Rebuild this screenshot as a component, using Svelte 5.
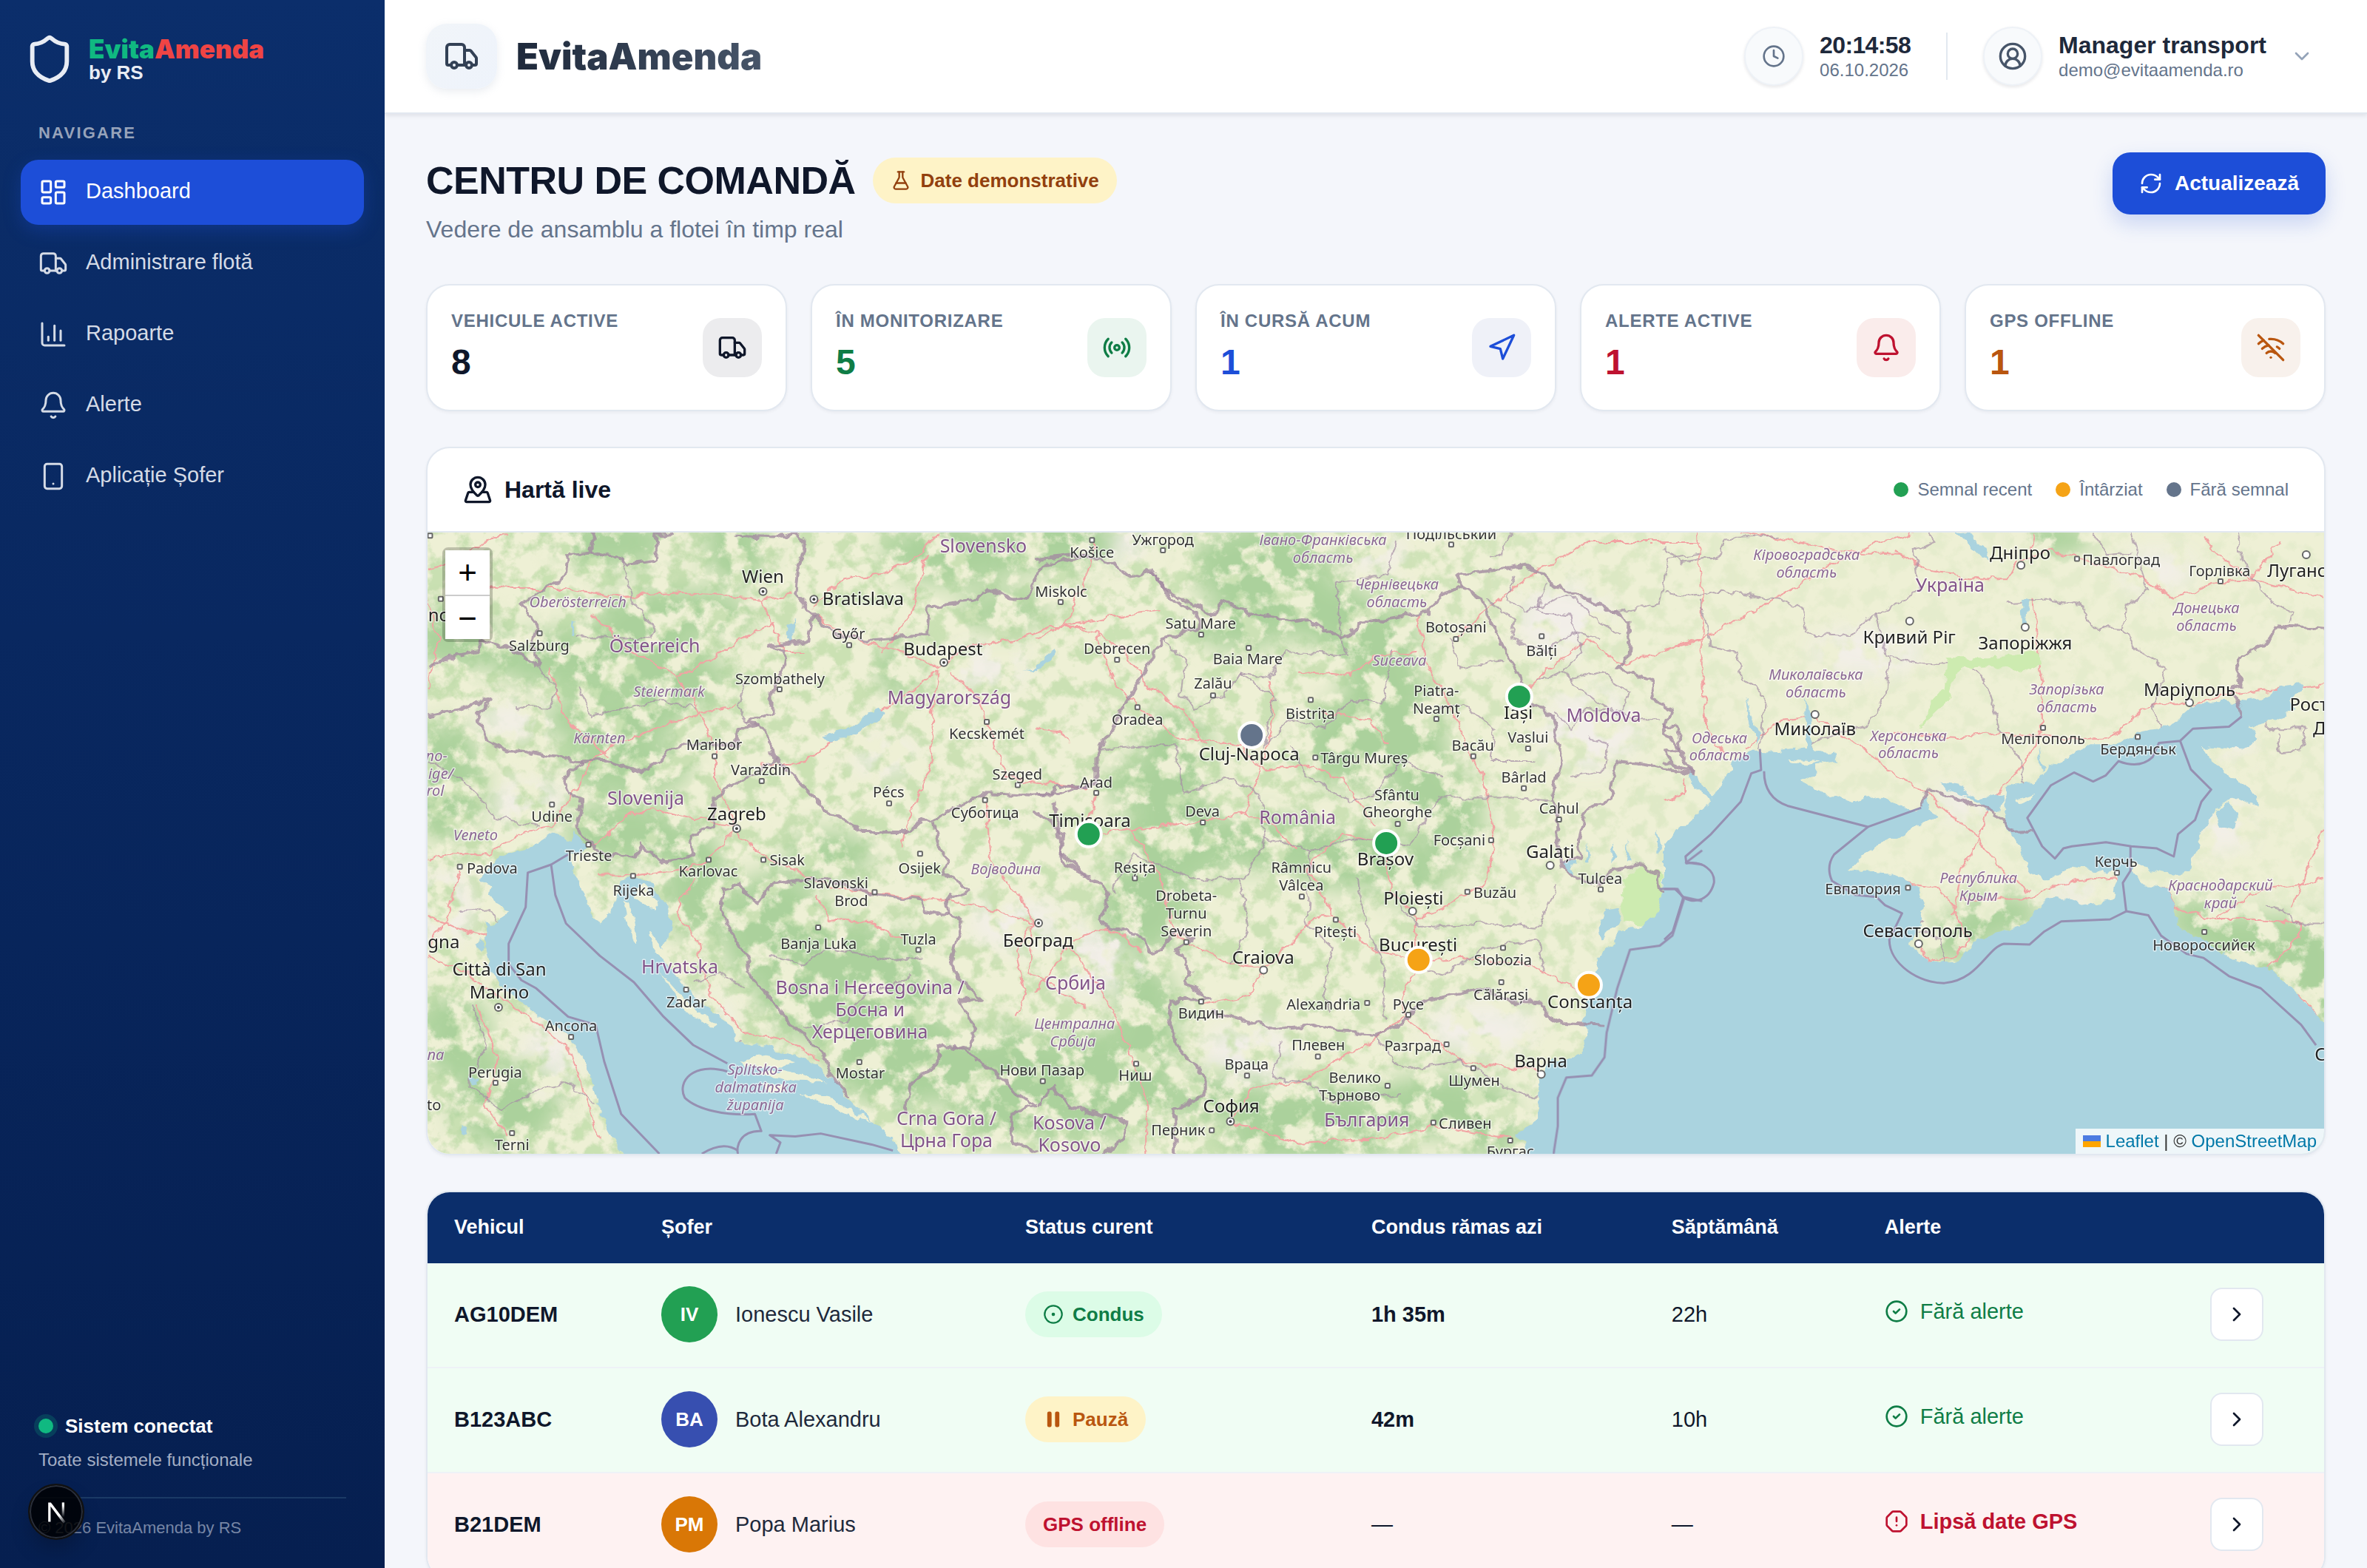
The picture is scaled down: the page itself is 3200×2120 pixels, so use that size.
<script lang="ts">
	type Sheet = 'west' | 'mid' | 'east';
	type LabelKind = 'city' | 'major' | 'country' | 'region';
	type Label = [x: number, y: number, text: string, kind: LabelKind];

	interface Stat {
		label: string;
		value: number;
		tone: string;
		icon: string;
	}
	interface VehicleRow {
		plate: string;
		driver: string;
		initials: string;
		avatar: string;
		status: string;
		statusTone: string;
		statusIcon: string | null;
		remaining: string | null;
		week: string | null;
		alert: string | null;
	}

	const ICONS: Record<string, string> = {
		shield:
			'<path d="M20 13c0 5-3.5 7.5-7.66 8.95a1 1 0 0 1-.67-.01C7.5 20.5 4 18 4 13V6a1 1 0 0 1 1-1c2 0 4.5-1.2 6.24-2.72a1.17 1.17 0 0 1 1.52 0C14.51 3.81 17 5 19 5a1 1 0 0 1 1 1z"/>',
		dashboard:
			'<rect width="7" height="9" x="3" y="3" rx="1"/><rect width="7" height="5" x="14" y="3" rx="1"/><rect width="7" height="9" x="14" y="12" rx="1"/><rect width="7" height="5" x="3" y="16" rx="1"/>',
		truck:
			'<path d="M14 18V6a2 2 0 0 0-2-2H4a2 2 0 0 0-2 2v11a1 1 0 0 0 1 1h2"/><path d="M15 18H9"/><path d="M19 18h2a1 1 0 0 0 1-1v-3.65a1 1 0 0 0-.22-.624l-3.48-4.35A1 1 0 0 0 17.52 8H14"/><circle cx="17" cy="18" r="2"/><circle cx="7" cy="18" r="2"/>',
		chart: '<path d="M3 3v16a2 2 0 0 0 2 2h16"/><path d="M18 17V9"/><path d="M13 17V5"/><path d="M8 17v-3"/>',
		bell: '<path d="M10.268 21a2 2 0 0 0 3.464 0"/><path d="M3.262 15.326A1 1 0 0 0 4 17h16a1 1 0 0 0 .74-1.673C19.41 13.956 18 12.499 18 8A6 6 0 0 0 6 8c0 4.499-1.411 5.956-2.738 7.326"/>',
		phone: '<rect width="14" height="20" x="5" y="2" rx="2"/><path d="M12 18h.01"/>',
		clock: '<circle cx="12" cy="12" r="10"/><path d="M12 6v6l4 2"/>',
		user: '<path d="M18 20a6 6 0 0 0-12 0"/><circle cx="12" cy="10" r="4"/><circle cx="12" cy="12" r="10"/>',
		down: '<path d="m6 9 6 6 6-6"/>',
		right: '<path d="m9 18 6-6-6-6"/>',
		flask:
			'<path d="M14 2v6a2 2 0 0 0 .245.96l5.51 10.08A2 2 0 0 1 18 22H6a2 2 0 0 1-1.755-2.96l5.51-10.08A2 2 0 0 0 10 8V2"/><path d="M6.453 15h11.094"/><path d="M8.5 2h7"/>',
		refresh:
			'<path d="M3 12a9 9 0 0 1 9-9 9.75 9.75 0 0 1 6.74 2.74L21 8"/><path d="M21 3v5h-5"/><path d="M21 12a9 9 0 0 1-9 9 9.75 9.75 0 0 1-6.74-2.74L3 16"/><path d="M8 16H3v5"/>',
		radio:
			'<path d="M16.247 7.761a6 6 0 0 1 0 8.478"/><path d="M19.075 4.933a10 10 0 0 1 0 14.134"/><path d="M4.925 19.067a10 10 0 0 1 0-14.134"/><path d="M7.753 16.239a6 6 0 0 1 0-8.478"/><circle cx="12" cy="12" r="2"/>',
		navigation: '<polygon points="3 11 22 2 13 21 11 13 3 11"/>',
		offline:
			'<path d="M12 20h.01"/><path d="M8.5 16.429a5 5 0 0 1 7 0"/><path d="M5 12.859a10 10 0 0 1 5.17-2.69"/><path d="M19 12.859a10 10 0 0 0-2.007-1.523"/><path d="M2 8.82a15 15 0 0 1 4.177-2.643"/><path d="M22 8.82a15 15 0 0 0-11.288-3.764"/><path d="m2 2 20 20"/>',
		mapPin:
			'<path d="M18 8c0 3.613-3.869 7.429-5.393 8.795a1 1 0 0 1-1.214 0C9.87 15.429 6 11.613 6 8a6 6 0 0 1 12 0"/><circle cx="12" cy="8" r="2"/><path d="M8.714 14h-3.71a1 1 0 0 0-.948.683l-2.004 6A1 1 0 0 0 3 22h18a1 1 0 0 0 .948-1.316l-2-6a1 1 0 0 0-.949-.684h-3.712"/>',
		driving: '<circle cx="12" cy="12" r="10"/><circle cx="12" cy="12" r="1"/>',
		pause: '<rect x="15" y="4" width="3" height="16" rx="1" fill="currentColor"/><rect x="6" y="4" width="3" height="16" rx="1" fill="currentColor"/>',
		check: '<circle cx="12" cy="12" r="10"/><path d="m9 12 2 2 4-4"/>',
		alert:
			'<path d="M12 16h.01"/><path d="M12 8v4"/><path d="M15.312 2a2 2 0 0 1 1.414.586l4.688 4.688A2 2 0 0 1 22 8.688v6.624a2 2 0 0 1-.586 1.414l-4.688 4.688a2 2 0 0 1-1.414.586H8.688a2 2 0 0 1-1.414-.586l-4.688-4.688A2 2 0 0 1 2 15.312V8.688a2 2 0 0 1 .586-1.414l4.688-4.688A2 2 0 0 1 8.688 2z"/>'
	};

	const nav = [
		{ label: 'Dashboard', icon: 'dashboard', active: true },
		{ label: 'Administrare flotă', icon: 'truck', active: false },
		{ label: 'Rapoarte', icon: 'chart', active: false },
		{ label: 'Alerte', icon: 'bell', active: false },
		{ label: 'Aplicație Șofer', icon: 'phone', active: false }
	];

	const stats: Stat[] = [
		{ label: 'Vehicule active', value: 8, tone: 'ink', icon: 'truck' },
		{ label: 'În monitorizare', value: 5, tone: 'green', icon: 'radio' },
		{ label: 'În cursă acum', value: 1, tone: 'blue', icon: 'navigation' },
		{ label: 'Alerte active', value: 1, tone: 'red', icon: 'bell' },
		{ label: 'GPS offline', value: 1, tone: 'amber', icon: 'offline' }
	];

	const rows: VehicleRow[] = [
		{
			plate: 'AG10DEM',
			driver: 'Ionescu Vasile',
			initials: 'IV',
			avatar: '#22a053',
			status: 'Condus',
			statusTone: 'driving',
			statusIcon: 'driving',
			remaining: '1h 35m',
			week: '22h',
			alert: null
		},
		{
			plate: 'B123ABC',
			driver: 'Bota Alexandru',
			initials: 'BA',
			avatar: '#374fb0',
			status: 'Pauză',
			statusTone: 'paused',
			statusIcon: 'pause',
			remaining: '42m',
			week: '10h',
			alert: null
		},
		{
			plate: 'B21DEM',
			driver: 'Popa Marius',
			initials: 'PM',
			avatar: '#d97706',
			status: 'GPS offline',
			statusTone: 'lost',
			statusIcon: null,
			remaining: null,
			week: null,
			alert: 'Lipsă date GPS'
		}
	];

	// The map is digitised in three sheets that share one scale and differ in their left edge.
	const SX = 0.574;
	const SY = 0.5485;
	const LEFT: Record<Sheet, number> = { west: -8, mid: 822, east: 1672 };
	const sheets: Sheet[] = ['west', 'mid', 'east'];
	const px = (s: Sheet, x: number) => LEFT[s] + x * SX;
	const py = (y: number) => y * SY - 20;
	const FONT_SIZE: Record<LabelKind, number> = { city: 20, major: 24, country: 25, region: 20 };

	const water: Record<Sheet, string[]> = {
		west: [
			'M285 795L260 815L215 825L190 835L165 850L135 890L165 905L160 930L175 955L200 965L185 1000L165 1005L150 995L150 1060L160 1110L180 1145L195 1165L250 1205L300 1245L350 1280L375 1320L395 1370L410 1420L425 1480L450 1530L490 1590L1130 1590L1118 1535L1060 1490L1000 1430L980 1395L930 1350L870 1320L800 1300L740 1292L730 1250L680 1215L640 1180L610 1140L575 1095L570 1060L590 1010L580 965L560 925L545 905L500 885L470 895L458 940L445 970L425 1000L405 990L395 960L380 920L362 880L350 835L392 812L375 790L355 768L348 795L310 778Z',
			'M945 545L975 528L1010 515L1060 478L1078 470L1090 485L1040 525L1000 545L960 552Z',
			'M865 255L880 250L875 290L866 310L859 300Z',
			'M128 1045L140 1038L148 1060L135 1066Z',
			'M95 1500L110 1500L108 1520L94 1520Z',
			'M1420 373L1445 374L1480 330L1495 320L1480 352L1450 378Z',
			'M355 255L362 258L356 285L352 290Z',
			'M115 1380L138 1384L132 1398L118 1395Z'
		],
		mid: [
			'M1570 745L1520 800L1490 815L1482 850L1480 910L1465 960L1460 985L1420 1010L1380 1018L1350 1055L1320 1100L1310 1130L1300 1180L1294 1250L1298 1300L1270 1330L1215 1335L1190 1370L1184 1440L1185 1480L1130 1515L1160 1540L1140 1590L1570 1590Z',
			'M1345 965L1378 960L1370 1000L1335 1040L1330 1010Z',
			'M1540 630L1560 635L1570 670L1550 650Z',
			'M1465 770L1475 815L1462 830Z',
			'M1300 800L1304 850L1296 850Z',
			'M1358 800L1364 840L1354 850Z',
			'M1395 790L1400 850L1390 850Z',
			'M1235 845L1265 850L1268 880Z'
		],
		east: [
			'M0 800L60 745L110 700L140 640L165 600L205 575L270 578L345 570L400 580L405 600L350 610L362 630L320 650L380 680L440 700L510 685L560 712L602 720L612 690L640 740L560 780L490 810L435 870L530 878L600 908L612 960L600 1010L578 1052L620 1092L690 1095L738 1040L800 1018L850 1000L892 950L920 930L985 955L1055 942L1062 905L1075 870L1040 875L960 860L900 895L858 870L840 820L805 760L800 700L810 660L870 650L930 600L1000 560L1060 560L1110 530L1160 520L1210 495L1250 458L1340 455L1400 445L1460 415L1500 410L1502 425L1475 450L1490 470L1440 500L1380 515L1400 540L1370 570L1310 565L1268 562L1290 600L1350 650L1400 690L1398 710L1350 688L1300 710L1260 790L1238 870L1200 880L1150 870L1110 850L1095 870L1130 905L1190 910L1200 960L1212 1010L1270 1040L1340 1090L1420 1110L1470 1150L1510 1195L1590 1280L1590 1590L0 1590Z',
			'M55 625L75 640L115 690L108 705L80 670L62 655Z',
			'M190 440L205 490L225 530L218 560L200 500Z',
			'M330 440L345 480L350 570L335 575Z',
			'M680 36L720 36L750 75L765 105L745 95L705 50Z',
			'M840 200L860 205L852 262L845 255Z',
			'M880 560L890 600L900 620L888 625Z',
			'M650 650L700 660L720 690L690 680L665 672Z',
			'M700 690L740 690L800 680L790 720L760 730L740 700Z',
			'M1300 715L1330 700L1350 730L1340 770L1310 760Z'
		]
	};

	const islands: Record<Sheet, string[]> = {
		west: [
			'M495 930L520 905L560 945L548 970L520 950Z',
			'M475 945L490 950L500 1010L508 1050L492 1040L485 990Z',
			'M540 1020L555 1035L580 1085L600 1110L570 1095L545 1058Z',
			'M560 1120L640 1210L700 1255L690 1262L620 1215Z',
			'M745 1338L810 1325L880 1340L850 1352L760 1352Z',
			'M780 1370L850 1360L960 1395L880 1392Z',
			'M890 1418L960 1428L1060 1490L1000 1470Z',
			'M810 1400L860 1402L850 1412L815 1412Z'
		],
		mid: [],
		east: ['M830 695L870 682L862 692L835 706Z', 'M290 595L360 602L340 610L295 602Z']
	};

	// Soft blobs that say where woodland and bare land are densest.
	const woods: Record<Sheet, [number, number, number, number][]> = {
		west: [
			[590, 240, 170, 50],
			[400, 350, 230, 60],
			[600, 400, 110, 60],
			[450, 500, 150, 50],
			[480, 620, 140, 50],
			[480, 780, 130, 60],
			[640, 900, 60, 130],
			[960, 830, 90, 40],
			[830, 1020, 110, 130],
			[1000, 1150, 200, 140],
			[1130, 1330, 160, 110],
			[1400, 1400, 150, 130],
			[1260, 90, 160, 60],
			[1500, 70, 90, 40],
			[1370, 230, 90, 30],
			[80, 300, 90, 60],
			[60, 650, 70, 130],
			[80, 1280, 70, 90],
			[200, 1450, 110, 90],
			[450, 60, 120, 50],
			[1120, 370, 30, 60],
			[740, 60, 60, 90]
		],
		mid: [
			[530, 120, 150, 90],
			[670, 230, 120, 60],
			[60, 60, 110, 60],
			[790, 300, 100, 70],
			[820, 430, 80, 120],
			[740, 560, 100, 90],
			[900, 600, 60, 130],
			[480, 270, 90, 40],
			[330, 600, 70, 120],
			[240, 660, 60, 40],
			[330, 800, 110, 100],
			[250, 960, 90, 100],
			[520, 800, 170, 50],
			[740, 840, 130, 60],
			[980, 740, 60, 100],
			[880, 880, 60, 60],
			[260, 1240, 60, 130],
			[150, 1400, 160, 120],
			[420, 1430, 100, 40],
			[620, 1460, 180, 50],
			[950, 1450, 160, 60],
			[650, 1540, 200, 40],
			[1070, 1520, 60, 40]
		],
		east: [
			[790, 980, 80, 40],
			[690, 1040, 60, 40],
			[1250, 990, 50, 40],
			[1370, 1040, 110, 50],
			[1500, 1080, 90, 90],
			[1540, 1170, 50, 70],
			[1460, 1060, 120, 50],
			[920, 50, 70, 30]
		]
	};

	const pale: Record<Sheet, [number, number, number, number][]> = {
		west: [
			[220, 500, 90, 40],
			[250, 700, 90, 50],
			[60, 960, 60, 90],
			[1330, 370, 90, 50],
			[1090, 590, 70, 40],
			[1400, 1000, 110, 60],
			[300, 1330, 60, 90],
			[650, 1240, 80, 60]
		],
		mid: [
			[1240, 250, 110, 90],
			[1300, 520, 120, 100],
			[150, 1090, 110, 90],
			[500, 1320, 110, 70],
			[1050, 1260, 130, 60],
			[200, 60, 60, 50],
			[800, 90, 80, 40]
		],
		east: [
			[480, 330, 130, 60],
			[1330, 560, 60, 30],
			[1320, 760, 60, 70],
			[700, 700, 70, 40],
			[960, 920, 80, 30],
			[1160, 130, 90, 50]
		]
	};

	const borders: Record<Sheet, string[]> = {
		west: [
			'M400 36L400 85L345 90L340 140L305 165L235 210L275 270L262 310L275 365L235 340L195 320L145 300L130 330L60 345L15 370',
			'M400 85L470 100L485 115L550 105L555 40L590 36',
			'M740 45L830 50L880 36L900 60L898 90L885 130L880 190L920 235',
			'M15 487L85 475L110 462L165 450L130 480L155 550L200 575L235 575L370 600L440 600L520 625L560 600L590 570L625 560L740 560L745 520L800 510',
			'M380 600L335 645L345 680L375 695L365 760L410 820L440 830L500 842L520 805L560 850L640 835L635 785L690 760L685 690L750 650L830 600L825 570L800 510L765 505L825 480L825 430L850 380L858 330L815 315L910 305L920 235',
			'M920 235L980 290L1050 300L1190 290L1195 220L1300 205L1330 180L1400 200L1430 190L1460 120L1568 92',
			'M830 590L880 640L950 720L1040 775L1150 775L1180 745L1205 745L1240 725L1320 680L1430 685L1500 682L1568 655',
			'M1205 750L1215 800L1240 850L1230 880L1290 915L1235 945L1240 980L1275 990L1245 1110L1290 1160L1320 1190L1265 1190L1305 1260L1290 1310L1215 1300L1225 1340L1180 1370L1150 1400L1140 1470',
			'M1240 980L1190 970L1180 940L1130 935L1060 925L970 895L900 890L820 910L790 950L745 905L710 915L705 960L720 1010L765 1080L775 1130L800 1160L880 1260L945 1320L960 1370L1010 1430',
			'M1255 1300L1370 1380L1400 1420L1440 1450L1390 1470L1390 1530L1450 1568',
			'M1490 700L1510 850L1568 885'
		],
		mid: [
			'M0 105L90 90L180 110L220 145L275 130L320 200L375 235L385 270L300 300L250 390L200 480L140 590L140 660L50 660L40 685L0 685',
			'M275 130L300 170L350 205L425 240L440 205L500 235L560 245L600 255L640 250L665 270L720 300L770 260L920 235L960 190L1000 170L1050 200L1085 290L1140 390L1150 440L1215 490L1240 600L1220 680L1230 760L1235 850',
			'M1000 170L990 140L1040 135L1080 130L1150 118L1200 145L1220 165L1300 200L1350 225L1400 260L1395 340L1370 370L1450 400L1455 450L1500 470L1480 530L1520 570L1545 630L1440 610L1370 600L1355 690L1290 730L1280 800L1285 840L1235 850L1275 890L1330 905L1360 870L1420 855L1465 880L1470 915L1525 930',
			'M0 725L65 780L60 830L130 890L170 920L155 1000L260 1040L275 1080L330 1020L375 1040L330 1060L365 1120L355 1150L415 1185L320 1190L312 1240L340 1310L400 1380L400 1420L325 1460L330 1568',
			'M415 1220L500 1240L560 1262L650 1250L710 1265L800 1275L860 1250L920 1190L1060 1160L1120 1190L1190 1195L1200 1220L1240 1245L1340 1250',
			'M0 1450L40 1400L80 1450L150 1470L215 1490L200 1540L150 1568'
		],
		east: [
			'M1554 275L1500 270L1440 265L1420 310L1360 340L1345 380L1360 410L1340 420L1345 440L1360 490',
			'M0 510L30 515L35 570L0 575L20 610L65 625L0 600',
			'M870 772L820 775L800 745L760 720L740 710L690 695L615 668L605 715'
		]
	};

	const seaLines: Record<Sheet, string[]> = {
		west: [
			'M345 830L305 855L315 930L340 1000L420 1080L500 1145L570 1230L640 1300L720 1345',
			'M305 855L250 875L245 960L205 1050L205 1100L235 1140L270 1160L345 1230L410 1250L430 1340L470 1470L560 1568',
			'M720 1365C640 1340 600 1390 620 1430C650 1460 720 1475 785 1470L800 1512C750 1510 740 1550 745 1568',
			'M835 1568L845 1540L820 1522L880 1525L940 1518L1060 1545L1110 1560',
			'M660 1568Q710 1535 745 1560'
		],
		mid: [
			'M1470 915L1512 915L1527 940L1500 1030L1470 1055L1400 1065L1370 1160L1345 1270L1340 1330L1310 1375L1250 1380L1230 1430L1230 1500L1220 1568',
			'M1527 935L1570 945',
			'M1570 820L1532 850L1570 855'
		],
		east: [
			'M1360 490L1330 515L1245 520L1215 550L1240 620L1288 670L1265 700L1250 745L1210 780L1200 835L1160 815L1100 810L1040 800L960 810L940 815L920 840L890 810L870 770L855 740L910 660L965 628L1010 650L1040 635L1070 600Q1120 620 1150 590L1165 555L1215 550',
			'M605 715L480 762L290 710Q235 690 235 625',
			'M225 570L228 622L205 630L180 700L110 780L50 835L52 852C90 845 120 870 117 900C105 950 60 950 45 935L20 1020L0 1040',
			'M0 915L25 915L45 935',
			'M480 762L400 830Q380 860 395 895L450 930L500 935L520 955L560 975L530 1040C530 1100 600 1148 660 1147C740 1140 760 1060 800 1050L860 1052L895 1020L935 995L1050 990L1088 970L1080 900L1098 870L1098 810',
			'M1088 970L1140 980L1170 1030L1230 1075L1270 1085L1330 1130L1405 1160L1500 1250L1535 1300'
		]
	};

	const provinces: Record<Sheet, string[]> = {
		west: [
			'M470 100L500 210L550 280L540 300L360 290',
			'M275 365L320 430L300 470L220 465',
			'M370 420L400 490L560 450L650 470',
			'M760 400L745 460L765 510',
			'M15 600L90 640L180 740L280 760',
			'M90 970L160 965L185 1000',
			'M820 1080L900 1100L960 1060L1100 1090L1180 1080',
			'M900 1260L1000 1240L1040 1180L1150 1130',
			'M640 1150L700 1120L760 1160',
			'M120 1200L150 1300L110 1400L190 1460L260 1420L340 1390L410 1440',
			'M430 1075L465 950',
			'M480 1130L510 1095',
			'M590 1245L640 1215',
			'M720 1340L755 1290',
			'M880 1400L980 1403'
		],
		mid: [
			'M300 300L350 350L340 440L380 470L440 440L480 380L550 395L590 330L735 340L720 300',
			'M150 570L240 565L330 560L350 680L450 640L530 680',
			'M480 380L560 440L540 560L600 500L680 520L740 450L820 455L840 330',
			'M530 680L540 790L650 820L760 790L880 810L950 690L1040 690L1130 690L1220 700',
			'M600 560L640 640L740 700L800 680L860 600L960 640',
			'M980 300L1000 370L1100 350',
			'M950 470L1010 460L1080 520L1070 600L1180 600',
			'M180 920L230 830L370 890L490 890L540 790',
			'M480 890L500 1010L460 1100',
			'M650 820L640 1000L700 1060L680 1150L690 1220',
			'M755 890L780 1000L820 1110L820 1230',
			'M860 960L900 1010L1060 1000L1190 1010L1225 900',
			'M900 1110L960 1130L1060 1060L1180 1040L1200 1120',
			'M580 1290L560 1380L640 1390L700 1440L860 1420',
			'M800 1275L860 1360L1000 1340L1100 1400L1185 1430',
			'M1060 200L1130 250L1120 300L1200 330L1260 280L1330 300',
			'M1200 160L1180 230L1260 240L1290 330L1240 380L1180 400',
			'M1260 400L1330 380L1400 430L1380 480L1300 470L1260 520L1220 480',
			'M1300 540L1350 560L1340 620L1260 640',
			'M1130 140L1110 200L1150 230L1210 210L1260 190L1330 260L1380 290',
			'M1240 380L1280 420L1330 460L1420 500L1470 500',
			'M720 300L710 160L830 140L850 60',
			'M1070 100L1100 90L1120 36',
			'M1360 235L1470 210L1490 100L1568 90'
		],
		east: [
			'M0 185L60 195L130 180L270 200L325 225L335 285L440 290L500 235L600 180L590 80L640 60L620 36',
			'M85 200L110 320L170 330L185 400L240 440L225 570',
			'M0 70L40 110L130 95L140 50L270 45',
			'M500 230L520 340L600 355L720 365L860 345',
			'M530 345L520 440L480 510L350 550L345 570',
			'M720 370L755 400L790 520L840 600L845 650L905 685',
			'M805 210L900 205L980 215L1005 270L1080 275L1085 220L1140 180L1120 120L1100 36',
			'M1080 275L1110 320L1185 375L1150 460L1180 550',
			'M1010 36L1040 90L1100 85',
			'M1350 36L1360 110L1430 210L1480 235L1475 260',
			'M235 625L325 635L330 590',
			'M560 975L610 1000',
			'M630 1143L635 1105L660 1095L650 1040L600 1020',
			'M1360 485L1415 480L1420 520L1510 520L1500 575L1450 580L1445 530',
			'M1415 960L1470 975L1480 1000L1554 1000'
		]
	};

	const roads: Record<Sheet, string[]> = {
		west: [
			'M15 130L90 100L160 50L200 40',
			'M90 110L120 160L210 175L340 175L470 195L600 185L690 190L800 200L870 190',
			'M800 200L830 280L860 330L900 330',
			'M920 220L990 150L1080 140L1160 100L1220 40',
			'M930 240L1000 290L1120 330L1220 370',
			'M1220 370L1280 320L1400 300L1480 270L1568 270',
			'M1220 375L1120 450L1010 520L950 560L900 605L800 610',
			'M1220 375L1205 470L1200 600L1150 740L1130 810',
			'M1240 380L1310 440L1350 560L1380 640L1568 665',
			'M690 560L650 470L600 390L490 330L440 270L400 240',
			'M600 390L680 350L750 300L830 260',
			'M740 760L690 640L690 560',
			'M740 760L640 740L550 720L480 735L430 790L390 810',
			'M740 770L800 830L900 880L960 910L1130 930L1240 945L1350 970L1440 1000',
			'M740 770L670 850L600 870L500 880L420 880',
			'M640 890L600 970L650 1040L660 1120L690 1190L760 1270L870 1290L940 1340',
			'M15 840L70 830L160 830L230 780L310 760L400 600L450 560L600 500L740 460',
			'M15 980L80 1010L150 1030',
			'M90 870L60 980L20 1060',
			'M15 1080L100 1120L240 1220L340 1300L380 1400L420 1530',
			'M130 1200L180 1330L150 1450L200 1520',
			'M1330 700L1340 850L1400 920L1440 1000L1430 1120L1568 1210',
			'M1440 1000L1400 1070L1420 1180L1400 1230',
			'M930 930L960 990L1060 1000L1130 1040',
			'M300 370L340 500L440 590',
			'M15 200L40 300L15 420',
			'M1090 330L1150 240L1190 90'
		],
		mid: [
			'M0 300L70 265L145 285L210 330L260 410L340 470L400 560',
			'M70 265L110 170L140 60',
			'M70 265L180 245L290 230',
			'M145 285L180 400L240 465',
			'M140 680L120 780L230 770L380 750L490 730L530 620',
			'M240 465L330 540L480 560L530 620L640 610L720 640L800 760',
			'M490 730L560 760L610 820',
			'M230 770L290 880L330 1030L460 1100L540 1110',
			'M540 1110L620 1030L650 990L700 980L800 1070L900 1090',
			'M700 980L640 860L720 780L820 800',
			'M820 830L840 930L890 970L900 1090',
			'M890 990L980 950L1060 900L1080 790L1060 660L1030 590L980 470L920 360L900 240',
			'M900 1090L1010 1085L1150 1100L1240 1140L1300 1180',
			'M900 1100L860 1200L880 1240L1000 1340L1190 1365',
			'M540 1120L500 1180L390 1200',
			'M0 1170L80 1050L180 1210L230 1340L260 1430L260 1568',
			'M460 1490L520 1400L620 1390L760 1310L870 1230',
			'M460 1490L620 1540L800 1530L940 1500L1120 1530',
			'M90 1040L170 1010L250 1070',
			'M550 400L560 500L530 620',
			'M1140 440L1200 380L1300 300L1380 360L1568 300',
			'M990 300L1060 230L1180 130L1300 60L1568 60',
			'M0 520L50 525L80 550',
			'M620 380L740 390L800 340L900 330',
			'M680 480L790 500L830 560'
		],
		east: [
			'M80 36L90 200L90 400L100 520L140 580',
			'M0 325L90 295L180 250L260 200L370 130L500 60L590 36',
			'M180 36L270 50L400 80L560 90',
			'M540 80L620 130L720 150L810 150L830 110',
			'M840 110L900 80L980 100L1130 150L1200 200L1300 160L1390 155',
			'M875 36L860 120',
			'M870 200L880 350L890 400L890 520L850 600L770 700L740 790L700 880L680 980',
			'M0 700L50 680L45 640',
			'M190 570L270 500L355 490L440 550L530 620L620 680L740 790',
			'M540 530L700 540L790 530L940 545L1050 540L1150 460L1240 460L1340 435L1554 410',
			'M740 790L800 880L860 920',
			'M560 895L640 910L680 960L700 1010L720 1040L680 1080L620 1090L600 1050',
			'M700 940L840 940L960 895L1060 885',
			'M1060 885L1090 910L1190 910L1200 960L1290 990L1400 990L1500 1000L1500 1030L1420 1110',
			'M1300 985L1400 920L1554 890',
			'M1480 960L1520 860L1554 760',
			'M1210 1040L1330 1090L1400 1110L1510 1190L1554 1250',
			'M1270 50L1320 100L1380 150L1554 200',
			'M1380 150L1450 60'
		]
	};

	const labels: Record<Sheet, Label[]> = {
		west: [
			[804, 146, 'Wien', 'major'],
			[1040, 200, 'Bratislava', 'major'],
			[1228, 323, 'Budapest', 'major'],
			[742, 730, 'Zagreb', 'major'],
			[1452, 1043, 'Београд', 'major'],
			[183, 1113, 'Città di San', 'major'],
			[183, 1170, 'Marino', 'major'],
			[52, 1045, 'gna', 'major'],
			[38, 240, 'nc', 'major'],
			[277, 316, 'Salzburg', 'city'],
			[1005, 286, 'Győr', 'city'],
			[844, 398, 'Szombathely', 'city'],
			[689, 560, 'Maribor', 'city'],
			[799, 621, 'Varaždin', 'city'],
			[1100, 677, 'Pécs', 'city'],
			[1331, 533, 'Kecskemét', 'city'],
			[1403, 633, 'Szeged', 'city'],
			[1327, 728, 'Суботица', 'city'],
			[307, 737, 'Udine', 'city'],
			[166, 865, 'Padova', 'city'],
			[394, 833, 'Trieste', 'city'],
			[499, 919, 'Rijeka', 'city'],
			[675, 871, 'Karlovac', 'city'],
			[861, 845, 'Sisak', 'city'],
			[1173, 865, 'Osijek', 'city'],
			[976, 901, 'Slavonski', 'city'],
			[1012, 945, 'Brod', 'city'],
			[935, 1050, 'Banja Luka', 'city'],
			[1170, 1040, 'Tuzla', 'city'],
			[624, 1195, 'Zadar', 'city'],
			[352, 1252, 'Ancona', 'city'],
			[173, 1368, 'Perugia', 'city'],
			[213, 1546, 'Terni', 'city'],
			[1033, 1369, 'Mostar', 'city'],
			[1461, 1362, 'Нови Пазар', 'city'],
			[29, 1447, 'to', 'city'],
			[1323, 69, 'Slovensko', 'country'],
			[549, 316, 'Österreich', 'country'],
			[1243, 444, 'Magyarország', 'country'],
			[528, 692, 'Slovenija', 'country'],
			[608, 1108, 'Hrvatska', 'country'],
			[1056, 1158, 'Bosna i Hercegovina /', 'country'],
			[1056, 1213, 'Босна и', 'country'],
			[1056, 1268, 'Херцеговина', 'country'],
			[1236, 1480, 'Crna Gora /', 'country'],
			[1236, 1535, 'Црна Гора', 'country'],
			[368, 207, 'Oberösterreich', 'region'],
			[583, 428, 'Steiermark', 'region'],
			[419, 543, 'Kärnten', 'region'],
			[127, 783, 'Veneto', 'region'],
			[1376, 866, 'Војводина', 'region'],
			[785, 1360, 'Splitsko-', 'region'],
			[787, 1403, 'dalmatinska', 'region'],
			[786, 1447, 'županija', 'region'],
			[35, 587, 'no-', 'region'],
			[45, 630, 'ige/', 'region'],
			[32, 673, 'rol', 'region'],
			[33, 1324, 'na', 'region']
		],
		mid: [
			[1137, 480, 'Iași', 'major'],
			[503, 582, 'Cluj-Napoca', 'major'],
			[128, 747, 'Timișoara', 'major'],
			[824, 842, 'Brașov', 'major'],
			[1212, 823, 'Galați', 'major'],
			[890, 938, 'Ploiești', 'major'],
			[901, 1053, 'București', 'major'],
			[536, 1084, 'Craiova', 'major'],
			[1306, 1194, 'Constanța', 'major'],
			[1190, 1340, 'Варна', 'major'],
			[461, 1451, 'София', 'major'],
			[133, 86, 'Košice', 'city'],
			[60, 182, 'Miskolc', 'city'],
			[300, 54, 'Ужгород', 'city'],
			[979, 40, 'Подільський', 'city'],
			[389, 260, 'Satu Mare', 'city'],
			[192, 323, 'Debrecen', 'city'],
			[500, 348, 'Baia Mare', 'city'],
			[990, 270, 'Botoșani', 'city'],
			[1192, 328, 'Bălți', 'city'],
			[418, 409, 'Zalău', 'city'],
			[240, 497, 'Oradea', 'city'],
			[647, 483, 'Bistrița', 'city'],
			[944, 427, 'Piatra-', 'city'],
			[944, 471, 'Neamț', 'city'],
			[1160, 541, 'Vaslui', 'city'],
			[1030, 561, 'Bacău', 'city'],
			[774, 592, 'Târgu Mureș', 'city'],
			[143, 653, 'Arad', 'city'],
			[1150, 640, 'Bârlad', 'city'],
			[393, 723, 'Deva', 'city'],
			[851, 683, 'Sfântu', 'city'],
			[852, 726, 'Gheorghe', 'city'],
			[1233, 717, 'Cahul', 'city'],
			[234, 863, 'Reșița', 'city'],
			[998, 795, 'Focșani', 'city'],
			[626, 863, 'Râmnicu', 'city'],
			[626, 907, 'Vâlcea', 'city'],
			[1330, 890, 'Tulcea', 'city'],
			[355, 932, 'Drobeta-', 'city'],
			[355, 976, 'Turnu', 'city'],
			[355, 1019, 'Severin', 'city'],
			[1082, 925, 'Buzău', 'city'],
			[706, 1021, 'Pitești', 'city'],
			[1101, 1090, 'Slobozia', 'city'],
			[1096, 1176, 'Călărași', 'city'],
			[678, 1199, 'Alexandria', 'city'],
			[878, 1199, 'Русе', 'city'],
			[390, 1222, 'Видин', 'city'],
			[666, 1300, 'Плевен', 'city'],
			[888, 1302, 'Разград', 'city'],
			[497, 1347, 'Враца', 'city'],
			[235, 1374, 'Ниш', 'city'],
			[1033, 1388, 'Шумен', 'city'],
			[752, 1380, 'Велико', 'city'],
			[740, 1423, 'Търново', 'city'],
			[336, 1509, 'Перник', 'city'],
			[1012, 1493, 'Сливен', 'city'],
			[1118, 1562, 'Бургас', 'city'],
			[617, 738, 'România', 'country'],
			[1338, 487, 'Moldova', 'country'],
			[94, 1148, 'Србија', 'country'],
			[780, 1485, 'България', 'country'],
			[80, 1491, 'Kosova /', 'country'],
			[80, 1547, 'Kosovo', 'country'],
			[677, 54, 'Івано-Франківська', 'region'],
			[677, 98, 'область', 'region'],
			[851, 164, 'Чернівецька', 'region'],
			[851, 208, 'область', 'region'],
			[857, 351, 'Suceava', 'region'],
			[92, 1247, 'Централна', 'region'],
			[88, 1290, 'Србија', 'region']
		],
		east: [
			[838, 86, 'Дніпро', 'major'],
			[577, 294, 'Кривий Ріг', 'major'],
			[850, 309, 'Запоріжжя', 'major'],
			[355, 520, 'Миколаїв', 'major'],
			[1237, 424, 'Маріуполь', 'major'],
			[597, 1018, 'Севастополь', 'major'],
			[1512, 131, 'Луганськ', 'major'],
			[1518, 460, 'Рост', 'major'],
			[1543, 518, 'Д', 'major'],
			[1545, 1323, 'С', 'major'],
			[1076, 104, 'Павлоград', 'city'],
			[1308, 132, 'Горлівка', 'city'],
			[892, 546, 'Мелітополь', 'city'],
			[1116, 570, 'Бердянськ', 'city'],
			[1064, 848, 'Керчь', 'city'],
			[468, 915, 'Евпатория', 'city'],
			[1271, 1053, 'Новороссийск', 'city'],
			[673, 167, 'Україна', 'country'],
			[335, 91, 'Кіровоградська', 'region'],
			[335, 135, 'область', 'region'],
			[1277, 223, 'Донецька', 'region'],
			[1277, 266, 'область', 'region'],
			[357, 387, 'Миколаївська', 'region'],
			[357, 430, 'область', 'region'],
			[948, 423, 'Запорізька', 'region'],
			[948, 467, 'область', 'region'],
			[575, 537, 'Херсонська', 'region'],
			[575, 580, 'область', 'region'],
			[130, 543, 'Одеська', 'region'],
			[130, 586, 'область', 'region'],
			[740, 888, 'Республика', 'region'],
			[740, 931, 'Крым', 'region'],
			[1310, 906, 'Краснодарский', 'region'],
			[1310, 949, 'край', 'region']
		]
	};

	const towns: Record<Sheet, [number, number][]> = {
		west: [
			[20, 44], [45, 200], [278, 285], [1007, 314], [843, 423], [690, 588], [801, 649], [1101, 704],
			[1331, 503], [1404, 659], [1327, 696], [307, 707], [90, 860], [393, 806], [498, 883], [676, 843],
			[805, 843], [1174, 828], [1067, 923], [934, 1010], [1170, 1065], [623, 1163], [352, 1280],
			[174, 1393], [213, 1517], [1031, 1342], [1463, 1389]
		],
		mid: [
			[133, 55], [59, 208], [300, 80], [979, 66], [390, 288], [192, 350], [502, 321], [990, 299],
			[1192, 292], [418, 438], [240, 467], [648, 449], [944, 496], [1160, 569], [1031, 588], [659, 591],
			[143, 678], [1150, 667], [394, 751], [853, 755], [1233, 744], [234, 889], [1073, 795], [627, 934],
			[1331, 916], [355, 1046], [1017, 922], [707, 991], [1101, 1060], [1097, 1145], [781, 1196],
			[878, 1225], [390, 1193], [665, 1328], [968, 1298], [498, 1375], [237, 1346], [1031, 1357],
			[829, 1400], [415, 1510], [937, 1491], [1118, 1535]
		],
		east: [
			[972, 101], [1310, 157], [892, 518], [1115, 540], [1066, 875], [574, 912], [1272, 1021]
		]
	};

	const cities: Record<Sheet, [number, number][]> = {
		west: [],
		mid: [[1212, 857], [888, 970], [537, 1115], [1191, 1372]],
		east: [[840, 117], [578, 255], [850, 270], [355, 485], [1237, 456], [599, 1050], [1512, 91]]
	};

	const capitals: Record<Sheet, [number, number][]> = {
		west: [[804, 182], [924, 201], [1230, 357], [742, 766], [1453, 999], [181, 1207]],
		mid: [[459, 1488]],
		east: []
	};

	const vehicles = [
		{ near: 'Timișoara', x: 125, y: 780, state: 'recent' },
		{ near: 'Cluj-Napoca', x: 509, y: 536, state: 'none' },
		{ near: 'Iași', x: 1139, y: 441, state: 'recent' },
		{ near: 'Brașov', x: 826, y: 802, state: 'recent' },
		{ near: 'București', x: 902, y: 1090, state: 'late' },
		{ near: 'Constanța', x: 1303, y: 1152, state: 'late' }
	];

	const legend = [
		{ label: 'Semnal recent', state: 'recent' },
		{ label: 'Întârziat', state: 'late' },
		{ label: 'Fără semnal', state: 'none' }
	];
</script>

{#snippet icon(name: string)}
	<svg class="icon" viewBox="0 0 24 24" aria-hidden="true">{@html ICONS[name]}</svg>
{/snippet}

<div class="shell">
	<aside class="sidebar">
		<div class="logo">
			{@render icon('shield')}
			<div class="logo-text">
				<span class="logo-name"><span class="evita">Evita</span><span class="amenda">Amenda</span></span>
				<span class="logo-by">by RS</span>
			</div>
		</div>
		<p class="nav-title">NAVIGARE</p>
		<nav>
			{#each nav as item (item.label)}
				<a href="#{item.icon}" class:active={item.active}>
					{@render icon(item.icon)}
					<span>{item.label}</span>
				</a>
			{/each}
		</nav>
		<div class="side-foot">
			<p class="system"><span class="pulse"></span>Sistem conectat</p>
			<p class="system-sub">Toate sistemele funcționale</p>
			<p class="copyright">© 2026 EvitaAmenda by RS</p>
		</div>
		<button class="dev-badge" aria-label="Next.js">
			<svg viewBox="0 0 40 40" aria-hidden="true">
				<defs>
					<linearGradient id="legFade" gradientUnits="userSpaceOnUse" x1="20" y1="20" x2="27" y2="29">
						<stop offset="0.3" stop-color="#fff" />
						<stop offset="1" stop-color="#fff" stop-opacity="0" />
					</linearGradient>
					<linearGradient id="stemFade" gradientUnits="userSpaceOnUse" x1="0" y1="13" x2="0" y2="24">
						<stop offset="0.2" stop-color="#fff" />
						<stop offset="1" stop-color="#fff" stop-opacity="0" />
					</linearGradient>
				</defs>
				<path d="M14 13h2l11 14.5-1.6 1.3L15.8 16v11.500H14z" fill="url(#legFade)" />
				<path d="M24.300 13h1.800v11h-1.800z" fill="url(#stemFade)" />
			</svg>
		</button>
	</aside>

	<div class="page">
		<header>
			<div class="head-brand">
				<span class="head-icon">{@render icon('truck')}</span>
				<span class="head-name">EvitaAmenda</span>
			</div>
			<div class="head-right">
				<span class="round muted">{@render icon('clock')}</span>
				<div class="head-text">
					<span class="strong time">20:14:58</span>
					<span class="sub">06.10.2026</span>
				</div>
				<span class="divider"></span>
				<button class="account">
					<span class="round">{@render icon('user')}</span>
					<span class="head-text">
						<span class="strong">Manager transport</span>
						<span class="sub">demo@evitaamenda.ro</span>
					</span>
					<span class="caret">{@render icon('down')}</span>
				</button>
			</div>
		</header>

		<main>
			<div class="title-row">
				<div>
					<div class="title">
						<h1>CENTRU DE COMANDĂ</h1>
						<span class="demo">{@render icon('flask')}Date demonstrative</span>
					</div>
					<p class="lead">Vedere de ansamblu a flotei în timp real</p>
				</div>
				<button class="refresh">{@render icon('refresh')}Actualizează</button>
			</div>

			<section class="stats">
				{#each stats as s (s.label)}
					<div class="stat {s.tone}">
						<div>
							<p class="stat-label">{s.label}</p>
							<p class="stat-value">{s.value}</p>
						</div>
						<span class="stat-icon">{@render icon(s.icon)}</span>
					</div>
				{/each}
			</section>

			<section class="map-card">
				<div class="map-head">
					<h2>{@render icon('mapPin')}Hartă live</h2>
					<ul class="legend">
						{#each legend as l (l.label)}
							<li><span class="dot {l.state}"></span>{l.label}</li>
						{/each}
					</ul>
				</div>
				<div class="map">
					<svg class="tiles" viewBox="0 0 2564 840" preserveAspectRatio="xMidYMid slice">
						<defs>
							<filter id="forest" x="0" y="0" width="2564" height="840" filterUnits="userSpaceOnUse" color-interpolation-filters="sRGB">
								<feGaussianBlur in="SourceGraphic" stdDeviation="16" result="area" />
								<feTurbulence type="fractalNoise" baseFrequency="0.03" numOctaves="6" seed="7" />
								<feColorMatrix values="0 0 0 0 0.67  0 0 0 0 0.82  0 0 0 0 0.61  7 0 0 0 -2.8" />
								<feComposite in2="area" operator="in" />
							</filter>
							<filter id="bare" x="0" y="0" width="2564" height="840" filterUnits="userSpaceOnUse" color-interpolation-filters="sRGB">
								<feGaussianBlur in="SourceGraphic" stdDeviation="16" result="area" />
								<feTurbulence type="fractalNoise" baseFrequency="0.025" numOctaves="4" seed="3" />
								<feColorMatrix values="0 0 0 0 0.95  0 0 0 0 0.935  0 0 0 0 0.91  0 6 0 0 -2.3" />
								<feComposite in2="area" operator="in" />
							</filter>
							<filter id="meadow" x="0" y="0" width="2564" height="840" filterUnits="userSpaceOnUse" color-interpolation-filters="sRGB">
								<feTurbulence type="fractalNoise" baseFrequency="0.04" numOctaves="6" seed="12" />
								<feColorMatrix values="0 0 0 0 0.77  0 0 0 0 0.87  0 0 0 0 0.68  0 0 5 0 -2.3" />
								<feComposite in2="SourceGraphic" operator="in" />
							</filter>
							<filter id="rough" x="0" y="0" width="2564" height="840" filterUnits="userSpaceOnUse" color-interpolation-filters="sRGB">
								<feTurbulence type="fractalNoise" baseFrequency="0.06" numOctaves="3" seed="5" />
								<feDisplacementMap in="SourceGraphic" scale="13" xChannelSelector="R" yChannelSelector="G" />
							</filter>
							<linearGradient id="eastward">
								<stop offset="0" stop-color="#fff" stop-opacity="0.9" />
								<stop offset="0.5" stop-color="#fff" stop-opacity="0.8" />
								<stop offset="0.7" stop-color="#fff" stop-opacity="0.2" />
								<stop offset="1" stop-color="#fff" stop-opacity="0.2" />
							</linearGradient>
						</defs>

						<rect class="land" width="2564" height="840" />
						<rect width="2564" height="840" fill="url(#eastward)" filter="url(#meadow)" />
						<g filter="url(#bare)">
							{#each sheets as s (s)}
								{#each pale[s] as [x, y, rx, ry]}
									<ellipse cx={px(s, x)} cy={py(y)} rx={rx * SX} ry={ry * SY} />
								{/each}
							{/each}
						</g>
						<g filter="url(#forest)">
							{#each sheets as s (s)}
								{#each woods[s] as [x, y, rx, ry]}
									<ellipse cx={px(s, x)} cy={py(y)} rx={rx * SX + 10} ry={ry * SY + 10} />
								{/each}
							{/each}
						</g>

						<g filter="url(#rough)">
							{#each sheets as s (s)}
								<g transform="translate({LEFT[s]} -20) scale({SX} {SY})">
									{#each roads[s] as d}<path class="road" {d} />{/each}
									{#each provinces[s] as d}<path class="province" {d} />{/each}
								</g>
							{/each}
							<g transform="translate({LEFT.mid} -20) scale({SX} {SY})">
								<path class="park" d="M1385 890L1430 858L1480 880L1470 985L1440 1005L1380 1000Z" />
							</g>
							<g transform="translate({LEFT.east} -20) scale({SX} {SY})">
								<path class="park" d="M665 345L760 345L880 330L885 360L840 385L800 365L700 370L680 400L670 450L630 490L600 520L625 460L660 420Z" />
							</g>
							{#each sheets as s (s)}
								<g transform="translate({LEFT[s]} -20) scale({SX} {SY})">
									{#each water[s] as d}<path class="water" {d} />{/each}
									{#each islands[s] as d}<path class="land" {d} />{/each}
									{#each borders[s] as d}<path class="border" {d} />{/each}
								</g>
							{/each}
						</g>
						{#each sheets as s (s)}
							<g transform="translate({LEFT[s]} -20) scale({SX} {SY})">
								{#each seaLines[s] as d}<path class="sea-line" {d} />{/each}
							</g>
							{#each towns[s] as [x, y]}
								<rect class="town" x={px(s, x) - 3} y={py(y) - 3} width="6" height="6" rx="1" />
							{/each}
							{#each cities[s] as [x, y]}
								<circle class="town" cx={px(s, x)} cy={py(y)} r="5" />
							{/each}
							{#each capitals[s] as [x, y]}
								<circle class="town" cx={px(s, x)} cy={py(y)} r="5" />
								<circle class="core" cx={px(s, x)} cy={py(y)} r="2" />
							{/each}
						{/each}
						{#each sheets as s (s)}
							{#each labels[s] as [x, y, text, kind]}
								<text class={kind} x={px(s, x)} y={py(y) + FONT_SIZE[kind] * 0.35} font-size={FONT_SIZE[kind]}>{text}</text>
							{/each}
						{/each}
						{#each vehicles as v (v.near)}
							<circle class="vehicle {v.state}" cx={px('mid', v.x)} cy={py(v.y)} r="17">
								<title>{v.near}</title>
							</circle>
						{/each}
					</svg>
					<div class="zoom">
						<button aria-label="Mărește">+</button>
						<button aria-label="Micșorează">−</button>
					</div>
					<div class="attribution">
						<svg viewBox="0 0 12 8" aria-hidden="true">
							<path fill="#4c7be1" d="M0 0h12v4H0z" />
							<path fill="#ffa500" d="M0 4h12v4H0z" />
						</svg>
						<a href="#leaflet">Leaflet</a> | © <a href="#osm">OpenStreetMap</a>
					</div>
				</div>
			</section>

			<section class="table-card">
				<table>
					<thead>
						<tr>
							<th class="c-plate">Vehicul</th>
							<th class="c-driver">Șofer</th>
							<th class="c-status">Status curent</th>
							<th class="c-left">Condus rămas azi</th>
							<th class="c-week">Săptămână</th>
							<th class="c-alert">Alerte</th>
							<th></th>
						</tr>
					</thead>
					<tbody>
						{#each rows as r (r.plate)}
							<tr class:problem={r.alert}>
								<td><strong>{r.plate}</strong></td>
								<td>
									<div class="driver">
										<span class="avatar" style="background: {r.avatar}">{r.initials}</span>
										{r.driver}
									</div>
								</td>
								<td>
									<span class="pill {r.statusTone}">
										{#if r.statusIcon}{@render icon(r.statusIcon)}{/if}
										{r.status}
									</span>
								</td>
								<td>{#if r.remaining}<strong>{r.remaining}</strong>{:else}—{/if}</td>
								<td>{r.week ?? '—'}</td>
								<td>
									{#if r.alert}
										<div class="alert bad">{@render icon('alert')}{r.alert}</div>
									{:else}
										<div class="alert">{@render icon('check')}Fără alerte</div>
									{/if}
								</td>
								<td><button class="open" aria-label="Detalii {r.plate}">{@render icon('right')}</button></td>
							</tr>
						{/each}
					</tbody>
				</table>
			</section>
		</main>
	</div>
</div>

<style>
	:global(body) {
		margin: 0;
		overflow: hidden;
		background: #f4f6fb;
	}
	.shell {
		display: grid;
		grid-template-columns: 520px minmax(0, 1fr);
		height: 100vh;
		overflow: hidden;
		font-family: 'Liberation Sans', Arial, sans-serif;
		font-size: 29px;
		line-height: 44px;
		color: #0f172a;
	}
	p,
	h1,
	h2,
	ul {
		margin: 0;
		padding: 0;
	}
	button {
		font: inherit;
		color: inherit;
		border: 0;
		padding: 0;
		background: none;
		cursor: pointer;
	}
	.icon {
		width: 40px;
		height: 40px;
		flex: none;
		fill: none;
		stroke: currentColor;
		stroke-width: 2;
		stroke-linecap: round;
		stroke-linejoin: round;
	}

	.sidebar {
		position: relative;
		display: flex;
		flex-direction: column;
		background: linear-gradient(180deg, #0b2e6b, #061f50);
		color: #dbe2ee;
	}
	.logo {
		display: flex;
		align-items: center;
		gap: 16px;
		padding: 44px 32px 0;
		color: #e8ecf4;
	}
	.logo .icon {
		width: 70px;
		height: 72px;
	}
	.logo-text {
		display: flex;
		flex-direction: column;
		padding-left: 2px;
	}
	.logo-name {
		font-family: 'Arial Black', Inter, sans-serif;
		font-weight: 900;
		font-size: 35px;
		line-height: 36px;
	}
	.evita {
		color: #10b981;
	}
	.amenda {
		color: #ef4444;
	}
	.logo-by {
		font-size: 26px;
		line-height: 28px;
		font-weight: 700;
	}
	.nav-title {
		padding: 48px 52px 0;
		font-size: 22px;
		line-height: 32px;
		font-weight: 700;
		letter-spacing: 0.1em;
		color: #97a3ba;
	}
	nav {
		display: flex;
		flex-direction: column;
		gap: 8px;
		padding: 20px 28px;
	}
	nav a {
		display: flex;
		align-items: center;
		gap: 24px;
		height: 88px;
		padding: 0 24px;
		border-radius: 24px;
		color: #d5dbe6;
		text-decoration: none;
	}
	nav a .icon {
		stroke-width: 1.8;
	}
	nav a span {
		padding-bottom: 4px;
	}
	nav a.active {
		background: #1d4ed8;
		color: #fff;
		box-shadow: 0 8px 24px rgba(29, 78, 216, 0.3);
	}
	.side-foot {
		margin-top: auto;
		padding: 0 52px 34px;
	}
	.system {
		display: flex;
		align-items: center;
		gap: 16px;
		font-size: 26px;
		line-height: 40px;
		font-weight: 700;
		color: #fff;
	}
	.pulse {
		width: 20px;
		height: 20px;
		border-radius: 50%;
		background: #10b981;
		box-shadow: 0 0 0 6px rgba(16, 185, 129, 0.2);
	}
	.system-sub {
		padding: 8px 0 32px;
		font-size: 24px;
		line-height: 36px;
		color: #a3aec4;
		border-bottom: 2px solid #1b3a66;
	}
	.copyright {
		padding-top: 20px;
		font-size: 22px;
		line-height: 40px;
		color: #7786a5;
	}
	.dev-badge {
		position: absolute;
		left: 38px;
		bottom: 38px;
		width: 76px;
		height: 76px;
		border-radius: 50%;
		background: rgba(0, 0, 0, 0.85);
		border: 2px solid #111;
		box-shadow:
			inset 0 0 0 2px #2a2f3a,
			0 16px 32px -8px rgba(0, 0, 0, 0.3);
	}
	.dev-badge svg {
		display: block;
		width: 72px;
		height: 72px;
	}

	.page {
		min-width: 0;
		overflow: hidden;
		background: #f4f6fb;
	}
	header {
		position: relative;
		display: flex;
		align-items: center;
		justify-content: space-between;
		height: 152px;
		padding: 0 56px;
		background: #fff;
		border-bottom: 2px solid #e2e8f0;
		box-shadow: 0 2px 6px rgba(15, 23, 42, 0.1);
	}
	.head-brand,
	.head-right,
	.account {
		display: flex;
		align-items: center;
	}
	.head-brand {
		gap: 26px;
	}
	.head-icon {
		display: grid;
		place-items: center;
		width: 96px;
		height: 88px;
		border-radius: 28px;
		background: linear-gradient(135deg, #f1f5f9, #eef3fb);
		color: #334155;
		box-shadow: 0 4px 12px rgba(148, 163, 184, 0.2);
	}
	.head-icon .icon {
		width: 48px;
		height: 48px;
	}
	.head-name {
		font-family: 'Arial Black', Inter, sans-serif;
		font-weight: 900;
		font-size: 49px;
		line-height: 60px;
		padding-top: 2px;
		background: linear-gradient(90deg, #1e293b, #475569);
		background-clip: text;
		color: transparent;
	}
	.round {
		display: grid;
		place-items: center;
		box-sizing: border-box;
		width: 80px;
		height: 80px;
		border: 2px solid #eef2f7;
		border-radius: 50%;
		background: #f8fafc;
		color: #475569;
		box-shadow: 0 2px 4px rgba(15, 23, 42, 0.1);
	}
	.round.muted {
		color: #64748b;
	}
	.round.muted .icon {
		width: 32px;
		height: 32px;
	}
	.head-text {
		display: flex;
		flex-direction: column;
		padding: 2px 0 0 22px;
		text-align: left;
	}
	.strong {
		font-size: 32px;
		line-height: 36px;
		font-weight: 700;
		color: #1e293b;
	}
	.strong.time {
		letter-spacing: -0.02em;
	}
	.sub {
		font-size: 24px;
		line-height: 32px;
		color: #64748b;
	}
	.divider {
		width: 2px;
		height: 64px;
		margin: 0 48px;
		background: #e2e8f0;
	}
	.caret {
		display: flex;
		padding: 0 16px 0 32px;
		color: #94a3b8;
	}
	.caret .icon {
		width: 32px;
		height: 32px;
	}

	main {
		display: flex;
		flex-direction: column;
		gap: 48px;
		padding: 52px 56px;
	}
	.title-row {
		display: flex;
		align-items: flex-start;
		justify-content: space-between;
		min-height: 130px;
	}
	.title {
		display: flex;
		align-items: center;
		gap: 24px;
		min-height: 76px;
	}
	h1 {
		font-size: 52px;
		line-height: 64px;
		font-weight: 700;
		letter-spacing: -0.01em;
	}
	.demo {
		display: flex;
		align-items: center;
		gap: 12px;
		height: 62px;
		padding: 0 24px;
		border-radius: 999px;
		background: #fef3c7;
		color: #92400e;
		font-size: 26px;
		font-weight: 700;
	}
	.demo .icon,
	.pill .icon {
		width: 28px;
		height: 28px;
	}
	.lead {
		padding-top: 4px;
		font-size: 32px;
		line-height: 48px;
		color: #64748b;
	}
	.refresh {
		display: flex;
		align-items: center;
		gap: 16px;
		height: 84px;
		padding: 0 36px;
		border-radius: 24px;
		background: #1d4ed8;
		color: #fff;
		font-size: 28px;
		font-weight: 700;
		box-shadow: 0 12px 28px rgba(29, 78, 216, 0.2);
	}
	.refresh .icon {
		width: 32px;
		height: 32px;
	}

	.stats {
		display: grid;
		grid-template-columns: repeat(5, minmax(0, 1fr));
		gap: 32px;
	}
	.stat {
		--c: #0f172a;
		--bg: #ececee;
		display: flex;
		align-items: center;
		justify-content: space-between;
		padding: 32px;
		border: 2px solid #e2e8f0;
		border-radius: 32px;
		background: #fff;
		box-shadow: 0 2px 4px rgba(15, 23, 42, 0.05);
	}
	.stat.green {
		--c: #0f7d46;
		--bg: #eaf5ef;
	}
	.stat.blue {
		--c: #1d4ed8;
		--bg: #eff1f8;
	}
	.stat.red {
		--c: #be1230;
		--bg: #faeceb;
	}
	.stat.amber {
		--c: #b9560f;
		--bg: #f8f1ec;
	}
	.stat-label {
		font-size: 24px;
		line-height: 32px;
		font-weight: 700;
		letter-spacing: 0.03em;
		text-transform: uppercase;
		color: #64748b;
	}
	.stat-value {
		padding: 10px 0 2px;
		font-size: 48px;
		line-height: 60px;
		font-weight: 700;
		color: var(--c);
	}
	.stat-icon {
		display: grid;
		place-items: center;
		width: 80px;
		height: 80px;
		border-radius: 24px;
		background: var(--bg);
		color: var(--c);
	}

	.map-card,
	.table-card {
		overflow: hidden;
		border: 2px solid #e2e8f0;
		border-radius: 32px;
		background: #fff;
		box-shadow: 0 2px 4px rgba(15, 23, 42, 0.05);
	}
	.map-head {
		display: flex;
		align-items: center;
		justify-content: space-between;
		height: 112px;
		padding: 0 48px;
		border-bottom: 2px solid #e2e8f0;
	}
	h2 {
		display: flex;
		align-items: center;
		gap: 16px;
		font-size: 32px;
		line-height: 48px;
	}
	.legend {
		display: flex;
		gap: 32px;
		list-style: none;
		font-size: 24px;
		line-height: 36px;
		color: #64748b;
	}
	.legend li {
		display: flex;
		align-items: center;
		gap: 12px;
	}
	.dot {
		width: 20px;
		height: 20px;
		border-radius: 50%;
		background: currentColor;
	}
	.recent {
		color: #22a053;
	}
	.late {
		color: #f5a316;
	}
	.none {
		color: #64748b;
	}
	.map {
		position: relative;
		height: 840px;
	}
	.tiles {
		display: block;
		width: 100%;
		height: 100%;
		font-family: 'Noto Sans', sans-serif;
	}
	.tiles path {
		vector-effect: non-scaling-stroke;
	}
	.land {
		fill: #eef0d5;
	}
	.water {
		fill: #aad3df;
	}
	.park {
		fill: #cdebb0;
	}
	.road {
		fill: none;
		stroke: #f2a3a3;
		stroke-width: 2;
	}
	.province {
		fill: none;
		stroke: #a58fa5;
		stroke-width: 2;
		stroke-opacity: 0.7;
	}
	.border {
		fill: none;
		stroke: #a38ba0;
		stroke-width: 4;
		stroke-opacity: 0.8;
		stroke-linejoin: round;
	}
	.sea-line {
		fill: none;
		stroke: #9690b2;
		stroke-width: 3;
		stroke-linejoin: round;
	}
	.town {
		fill: #fff;
		stroke: #666;
		stroke-width: 2;
	}
	.core {
		fill: #444;
	}
	.tiles text {
		text-anchor: middle;
		paint-order: stroke;
		stroke: rgba(255, 255, 255, 0.6);
		stroke-width: 3px;
		stroke-linejoin: round;
		fill: #222;
	}
	.tiles .city {
		fill: #333;
	}
	.tiles .country {
		fill: #83548a;
	}
	.tiles .region {
		font-style: italic;
		fill: #8b6894;
	}
	.vehicle {
		fill: currentColor;
		stroke: #fff;
		stroke-width: 4;
	}
	.zoom {
		position: absolute;
		top: 20px;
		left: 20px;
		border: 4px solid rgba(0, 0, 0, 0.2);
		border-radius: 8px;
		background-clip: padding-box;
	}
	.zoom button {
		display: block;
		width: 60px;
		height: 60px;
		background: #fff;
		color: #000;
		font-size: 44px;
		line-height: 60px;
	}
	.zoom button + button {
		border-top: 2px solid #ccc;
	}
	.attribution {
		position: absolute;
		right: 0;
		bottom: 0;
		padding: 0 10px;
		background: rgba(255, 255, 255, 0.8);
		font-size: 24px;
		line-height: 34px;
		color: #333;
	}
	.attribution svg {
		width: 24px;
		height: 16px;
	}
	.attribution a {
		color: #0078a8;
		text-decoration: none;
	}

	table {
		width: 100%;
		border-collapse: separate;
		border-spacing: 0;
		table-layout: fixed;
	}
	th,
	td {
		box-sizing: border-box;
		padding: 0 36px 2px;
	}
	th {
		height: 96px;
		background: #0b2e6b;
		color: #fff;
		font-size: 27px;
		text-align: left;
	}
	.c-plate {
		width: 10.92%;
	}
	.c-driver {
		width: 19.19%;
	}
	.c-status {
		width: 18.25%;
	}
	.c-left {
		width: 15.83%;
	}
	.c-week {
		width: 11.23%;
	}
	.c-alert {
		width: 17.16%;
	}
	td {
		height: 142px;
		border-bottom: 2px solid #eef2f7;
		background: #f0fdf4;
	}
	.problem td {
		background: #fef2f2;
	}
	.driver,
	.alert {
		display: flex;
		align-items: center;
	}
	.driver {
		gap: 24px;
		color: #1e293b;
	}
	.avatar {
		display: grid;
		place-items: center;
		width: 76px;
		height: 76px;
		border-radius: 50%;
		color: #fff;
		font-size: 26px;
		font-weight: 700;
	}
	.pill {
		display: inline-flex;
		align-items: center;
		gap: 12px;
		height: 62px;
		padding: 0 24px;
		border-radius: 999px;
		font-size: 26px;
		font-weight: 700;
		vertical-align: middle;
	}
	.pill.driving {
		background: #dcfce7;
		color: #0f7d46;
	}
	.pill.paused {
		background: #fef3c7;
		color: #b9560f;
	}
	.pill.lost {
		background: #fee2e2;
		color: #be1230;
	}
	.alert {
		gap: 16px;
		padding-bottom: 8px;
		color: #0f7d46;
	}
	.alert.bad {
		color: #be1230;
		font-weight: 700;
	}
	.alert .icon,
	.open .icon {
		width: 32px;
		height: 32px;
	}
	.open {
		display: grid;
		place-items: center;
		box-sizing: border-box;
		width: 72px;
		height: 72px;
		border: 2px solid #e2e8f0;
		border-radius: 16px;
		background: #fff;
	}
</style>
